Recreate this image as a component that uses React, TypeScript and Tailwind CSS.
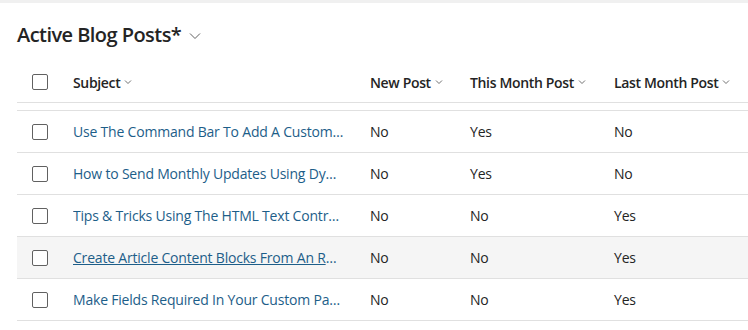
import React from "react";

const rows = [
  { subject: "Use The Command Bar To Add A Custom Button To Your Form", a: "No", b: "Yes", c: "No" },
  { subject: "How to Send Monthly Updates Using Dynamics 365 Marketing", a: "No", b: "Yes", c: "No" },
  { subject: "Tips & Tricks Using The HTML Text Control In Forms", a: "No", b: "No", c: "Yes" },
  { subject: "Create Article Content Blocks From An RSS Feed", a: "No", b: "No", c: "Yes", hover: true },
  { subject: "Make Fields Required In Your Custom Pages", a: "No", b: "No", c: "Yes" },
];

function Chevron({ size = 8 }: { size?: number }) {
  return (
    <svg width={size} height={size} viewBox="0 0 8 8" className="shrink-0 text-[#616161]">
      <path d="M1 2.5 L4 5.5 L7 2.5" fill="none" stroke="currentColor" strokeWidth="0.9" />
    </svg>
  );
}

function Checkbox() {
  return <div className="w-[16px] h-[16px] rounded-[2px] border border-[#616161] bg-white" />;
}

function HeaderCell({ label, className }: { label: string; className: string }) {
  return (
    <div className={`${className} flex items-center gap-[4px] text-[14px] font-semibold tracking-[-0.35px] text-[#242424]`}>
      <span>{label}</span>
      <Chevron />
    </div>
  );
}

export default function App() {
  return (
    <div
      className="w-[748px] h-[330px] bg-white overflow-hidden"
      style={{ fontFamily: '"Open Sans", "Noto Sans", sans-serif' }}
    >
      <div className="h-[3px] bg-[#f0f0f0]" />
      <div className="h-[59px] pl-[17px] pt-[5px] flex items-center gap-[8px]">
        <h1 className="text-[20px] font-semibold text-[#242424] tracking-[-0.55px]">Active Blog Posts*</h1>
        <svg width="12" height="8" viewBox="0 0 12 8" className="text-[#616161] mt-[2px]">
          <path d="M1 1.5 L6 6.5 L11 1.5" fill="none" stroke="currentColor" strokeWidth="1" />
        </svg>
      </div>
      <div className="ml-[17px]">
        <div className="h-[41px] flex items-center border-b border-[#e0e0e0]">
          <div className="w-[56px] pl-[15px] flex items-center">
            <Checkbox />
          </div>
          <HeaderCell label="Subject" className="w-[297px]" />
          <HeaderCell label="New Post" className="w-[100px]" />
          <HeaderCell label="This Month Post" className="w-[144px]" />
          <HeaderCell label="Last Month Post" className="flex-1" />
        </div>
        <div className="mt-[7px] border-t border-[#e0e0e0]">
          {rows.map((r, i) => (
            <div
              key={i}
              className={`h-[42px] flex items-center border-b border-[#e0e0e0] text-[14px] tracking-[-0.2px] ${r.hover ? "bg-[#f5f5f5]" : ""}`}
            >
              <div className="w-[56px] pl-[15px] flex items-center">
                <Checkbox />
              </div>
              <div className="w-[297px] pr-[26px]">
                <div className={`truncate text-[#1d5e89] ${r.hover ? "underline" : ""}`}>{r.subject}</div>
              </div>
              <div className="w-[100px] text-[#242424]">{r.a}</div>
              <div className="w-[144px] text-[#242424]">{r.b}</div>
              <div className="flex-1 text-[#242424]">{r.c}</div>
            </div>
          ))}
        </div>
      </div>
    </div>
  );
}
